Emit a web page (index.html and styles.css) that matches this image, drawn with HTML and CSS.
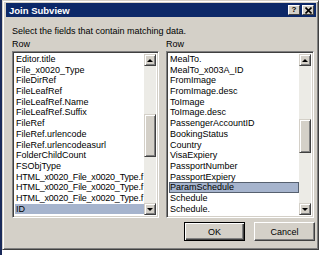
FILE: index.html
```html
<!DOCTYPE html>
<html lang="en">
<head>
  <meta charset="UTF-8">
  <title>Join Subview</title>
  <link rel="stylesheet" href="styles.css">
</head>
<body>
  <div class="window">
    <div class="titlebar">
      <span class="title">Join Subview</span>
      <span class="tbtns">
        <span class="tbtn">?</span>
        <span class="tbtn close">
          <svg width="7" height="7" viewBox="0 0 7 7"><path d="M0.5 0.5L6.5 6.5M6.5 0.5L0.5 6.5" stroke="#000" stroke-width="1.6"/></svg>
        </span>
      </span>
    </div>

    <div class="panel">
      <p class="hint">Select the fields that contain matching data.</p>

      <div class="cols">
        <div class="col">
          <div class="label">Row</div>
          <div class="list">
            <div class="items">
              <div class="item">Editor.title</div>
              <div class="item">File_x0020_Type</div>
              <div class="item">FileDirRef</div>
              <div class="item">FileLeafRef</div>
              <div class="item">FileLeafRef.Name</div>
              <div class="item">FileLeafRef.Suffix</div>
              <div class="item">FileRef</div>
              <div class="item">FileRef.urlencode</div>
              <div class="item">FileRef.urlencodeasurl</div>
              <div class="item">FolderChildCount</div>
              <div class="item">FSObjType</div>
              <div class="item long">HTML_x0020_File_x0020_Type.f</div>
              <div class="item long">HTML_x0020_File_x0020_Type.f</div>
              <div class="item long">HTML_x0020_File_x0020_Type.f</div>
              <div class="item selected">ID</div>
            </div>
            <div class="sb">
              <div class="arrow"><span class="tri up"></span></div>
              <div class="track">
                <div class="gap left-top"></div>
                <div class="thumb left-thumb"></div>
              </div>
              <div class="arrow"><span class="tri down"></span></div>
            </div>
          </div>
        </div>

        <div class="col">
          <div class="label">Row</div>
          <div class="list">
            <div class="items">
              <div class="item">MealTo.</div>
              <div class="item">MealTo_x003A_ID</div>
              <div class="item">FromImage</div>
              <div class="item">FromImage.desc</div>
              <div class="item">ToImage</div>
              <div class="item">ToImage.desc</div>
              <div class="item">PassengerAccountID</div>
              <div class="item">BookingStatus</div>
              <div class="item">Country</div>
              <div class="item">VisaExpiery</div>
              <div class="item">PassportNumber</div>
              <div class="item">PassportExpiery</div>
              <div class="item selected focus">ParamSchedule</div>
              <div class="item">Schedule</div>
              <div class="item">Schedule.</div>
            </div>
            <div class="sb">
              <div class="arrow"><span class="tri up"></span></div>
              <div class="track">
                <div class="gap right-top"></div>
                <div class="thumb right-thumb"></div>
              </div>
              <div class="arrow"><span class="tri down"></span></div>
            </div>
          </div>
        </div>
      </div>

      <div class="actions">
        <button class="btn default">OK</button>
        <button class="btn">Cancel</button>
      </div>
    </div>
  </div>
</body>
</html>
```

FILE: styles.css
```css
html, body {
  margin: 0;
  padding: 0;
}

body {
  width: 320px;
  height: 255px;
  background: linear-gradient(to right, #1a2a5a 2px, #ffffff 2px);
  font-family: 'Liberation Sans', Arial, sans-serif;
  font-size: 9px;
  color: #000;
  overflow: hidden;
}

.window {
  margin-left: 2px;
  width: 317px;
  height: 250px;
  box-sizing: border-box;
  background: #d4d0c8;
  border-top: 1px solid #d4d0c8;
  border-left: 1px solid #d4d0c8;
  border-right: 1px solid #404040;
  border-bottom: 1px solid #404040;
  box-shadow: inset 1px 1px 0 #fff, inset -1px -1px 0 #808080;
  padding: 2px 2px 2px 3px;
  display: flex;
  flex-direction: column;
}

.titlebar {
  height: 14px;
  background: #0c2868;
  display: flex;
  align-items: center;
  justify-content: space-between;
  padding: 0 2px 0 3px;
}

.title {
  color: #fff;
  font-weight: bold;
  font-size: 9.5px;
}

.tbtns {
  display: flex;
  gap: 2px;
}

.tbtn {
  width: 12px;
  height: 10px;
  box-sizing: border-box;
  background: #d4d0c8;
  border-top: 1px solid #fff;
  border-left: 1px solid #fff;
  border-right: 1px solid #404040;
  border-bottom: 1px solid #404040;
  font-weight: bold;
  font-size: 8px;
  line-height: 8px;
  text-align: center;
  display: flex;
  align-items: center;
  justify-content: center;
}

.panel {
  flex: 1;
  padding: 0 0 0 6px;
  display: flex;
  flex-direction: column;
}

.hint {
  margin: 8px 0 0 0;
  line-height: 12px;
}

.cols {
  display: flex;
  gap: 7px;
  margin-top: 1px;
}

.col {
  display: flex;
  flex-direction: column;
}

.col:first-child {
  width: 147px;
}

.col:last-child {
  width: 148px;
}

.label {
  line-height: 12px;
  height: 12px;
}

.list {
  margin-top: 1px;
  height: 167px;
  box-sizing: border-box;
  background: #fff;
  border-top: 1px solid #808080;
  border-left: 1px solid #808080;
  border-right: 1px solid #fff;
  border-bottom: 1px solid #fff;
  box-shadow: inset 1px 1px 0 #404040, inset -1px -1px 0 #d4d0c8;
  padding: 2px 2px 2px 2px;
  display: flex;
}

.items {
  flex: 1;
  min-width: 0;
  overflow: hidden;
}

.item {
  height: 10.7px;
  line-height: 10.7px;
  padding-left: 1px;
  white-space: nowrap;
  overflow: hidden;
}

.item.long {
  letter-spacing: -0.2px;
}

.item.selected {
  background: #a6b4cd;
}

.item.focus {
  outline: 1px solid #56606f;
  outline-offset: -1px;
}

.sb {
  width: 12px;
  display: flex;
  flex-direction: column;
  background: #ecebe6;
}

.arrow {
  height: 12px;
  box-sizing: border-box;
  background: #d4d0c8;
  border-top: 1px solid #d4d0c8;
  border-left: 1px solid #d4d0c8;
  border-right: 1px solid #404040;
  border-bottom: 1px solid #404040;
  box-shadow: inset 1px 1px 0 #fff, inset -1px -1px 0 #808080;
  display: flex;
  align-items: center;
  justify-content: center;
}

.tri {
  width: 0;
  height: 0;
  border-left: 3px solid transparent;
  border-right: 3px solid transparent;
}

.tri.up {
  border-bottom: 3px solid #000;
}

.tri.down {
  border-top: 3px solid #000;
}

.track {
  flex: 1;
  display: flex;
  flex-direction: column;
}

.thumb {
  box-sizing: border-box;
  background: #d4d0c8;
  border-top: 1px solid #d4d0c8;
  border-left: 1px solid #d4d0c8;
  border-right: 1px solid #404040;
  border-bottom: 1px solid #404040;
  box-shadow: inset 1px 1px 0 #fff, inset -1px -1px 0 #808080;
}

.left-top {
  height: 48px;
}

.left-thumb {
  height: 43px;
}

.right-top {
  height: 53px;
}

.right-thumb {
  height: 34px;
}

.actions {
  display: flex;
  justify-content: flex-end;
  gap: 9px;
  margin-top: 4px;
  padding-right: 1px;
}

.btn {
  font-family: 'Liberation Sans', Arial, sans-serif;
  font-size: 9px;
  height: 19px;
  width: 61px;
  padding: 0;
  background: #d4d0c8;
  color: #000;
  border-top: 1px solid #fff;
  border-left: 1px solid #fff;
  border-right: 1px solid #404040;
  border-bottom: 1px solid #404040;
  box-shadow: inset -1px -1px 0 #808080;
}

.btn.default {
  border: 1px solid #000;
  box-shadow: inset 1px 1px 0 #fff, inset -1px -1px 0 #404040, inset -2px -2px 0 #808080;
}
```
